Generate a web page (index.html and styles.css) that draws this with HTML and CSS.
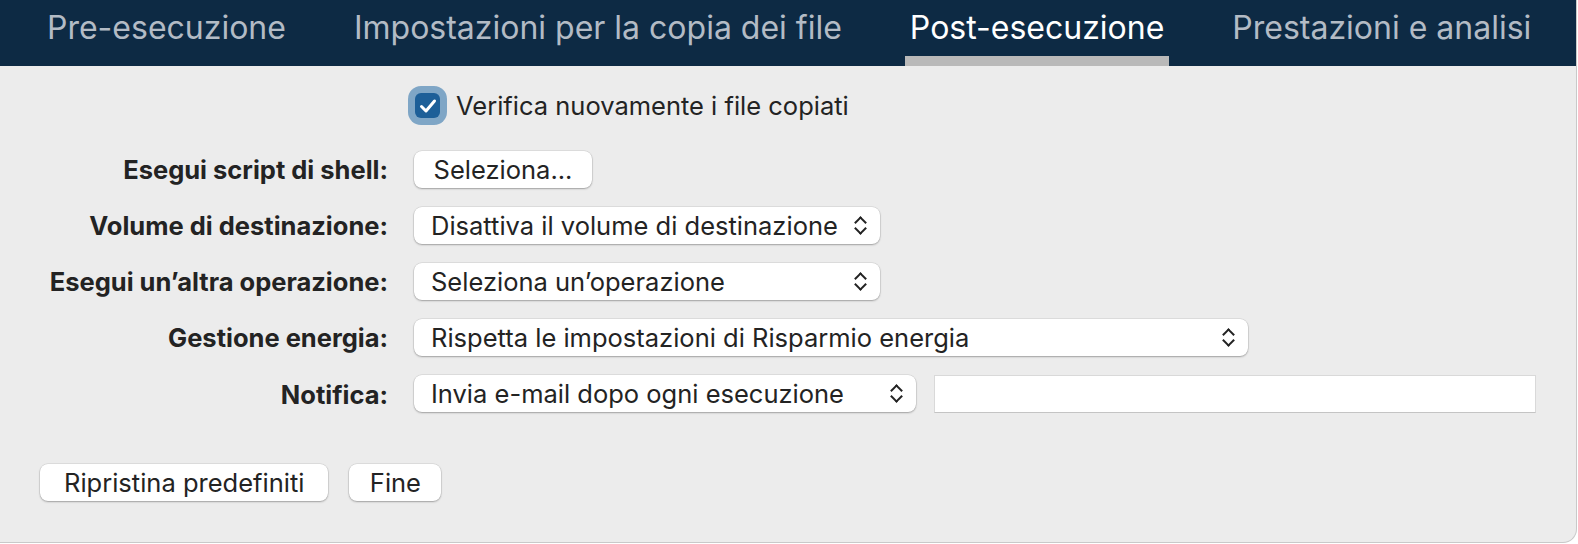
FILE: index.html
```html
<!doctype html>
<html>
    <head>
        <meta charset="utf-8">
        <link rel="stylesheet" href="styles.css">
    </head>
    <body>
    <div class="window">
        <div class="tabs">
            <div class="tab">Pre-esecuzione</div>
            <div class="tab">Impostazioni per la copia dei file</div>
            <div class="tab active">Post-esecuzione</div>
            <div class="tab">Prestazioni e analisi</div>
        </div>

        <div class="content">
            <div class="form">
                <div class="label"></div>
                <label class="check">
                    <span class="checkbox">
                        <svg width="18" height="16" viewBox="0 0 18 16"><path d="M2.5 8.5 L7 13 L15.5 3" fill="none" stroke="white" stroke-width="3" stroke-linecap="round" stroke-linejoin="round"/></svg>
                    </span>
                    Verifica nuovamente i file copiati
                </label>

                <div class="label first">Esegui script di shell:</div>
                <div class="first"><button class="btn pick">Seleziona...</button></div>

                <div class="label">Volume di destinazione:</div>
                <div class="select w-mid">Disattiva il volume di destinazione <span class="chev"></span></div>

                <div class="label">Esegui un’altra operazione:</div>
                <div class="select w-mid">Seleziona un’operazione <span class="chev"></span></div>

                <div class="label">Gestione energia:</div>
                <div class="select w-wide">Rispetta le impostazioni di Risparmio energia <span class="chev"></span></div>

                <div class="label">Notifica:</div>
                <div class="pair">
                    <div class="select w-mail">Invia e-mail dopo ogni esecuzione <span class="chev"></span></div>
                    <div class="field"></div>
                </div>
            </div>

            <div class="footer">
                <button class="btn">Ripristina predefiniti</button>
                <button class="btn fine">Fine</button>
            </div>
        </div>
    </div>
    </body>
</html>
```

FILE: styles.css
```css
body {
    margin: 0;
    background: white;
    font-family: Inter, "Liberation Sans", sans-serif;
    color: #232323;
}
.window {
    width: 1576px;
    height: 542px;
    background: #ececec;
    border-right: 1px solid #c9c9c9;
    border-bottom: 1px solid #c9c9c9;
    border-bottom-right-radius: 14px;
    overflow: hidden;
}
.tabs {
    display: flex;
    height: 66px;
    padding-left: 42px;
    gap: 58px;
    background: #0d2a44;
}
.tab {
    padding: 0 5px;
    font-size: 32px;
    line-height: 56px;
    color: #b3bbc5;
    border-bottom: 10px solid transparent;
}
.tab.active {
    color: white;
    border-bottom-color: #b9b9b9;
}

.content {
    padding: 21px 0 0 40px;
}
.form {
    display: grid;
    grid-template-columns: 348px auto;
    column-gap: 26px;
    row-gap: 19px;
    align-items: center;
    font-size: 25.5px;
}
.label {
    text-align: right;
    font-weight: 700;
    white-space: nowrap;
}
.first {
    margin-top: 8px;
}
.check {
    display: flex;
    align-items: center;
    gap: 16px;
    height: 37px;
}
.checkbox {
    display: flex;
    align-items: center;
    justify-content: center;
    width: 25px;
    height: 25px;
    margin-left: 1px;
    border-radius: 6px;
    background: #1d5f98;
    box-shadow: 0 0 0 7px #7fa6c6;
}
.btn {
    height: 37px;
    padding: 0 24px;
    border: none;
    border-radius: 8px;
    background: white;
    font-family: inherit;
    font-size: 25.5px;
    color: #232323;
    box-shadow: 0 0 0 0.5px rgba(0, 0, 0, 0.12), 0 1px 2px rgba(0, 0, 0, 0.28);
}
.pick {
    width: 178px;
    padding: 0;
}
.select {
    position: relative;
    box-sizing: border-box;
    height: 37px;
    line-height: 37px;
    padding-left: 17px;
    border-radius: 8px;
    background: white;
    white-space: nowrap;
    box-shadow: 0 0 0 0.5px rgba(0, 0, 0, 0.12), 0 1px 2px rgba(0, 0, 0, 0.28);
}
.w-mid { width: 466px; }
.w-wide { width: 834px; }
.w-mail { width: 502px; }
.chev {
    position: absolute;
    right: 13px;
    top: 8px;
    width: 14px;
    height: 20px;
}
.chev::before,
.chev::after {
    content: "";
    position: absolute;
    left: 3px;
    width: 7px;
    height: 7px;
    border-left: 2.4px solid #222;
    border-top: 2.4px solid #222;
}
.chev::before {
    top: 3px;
    transform: rotate(45deg);
}
.chev::after {
    top: 9px;
    transform: rotate(225deg);
}
.pair {
    display: flex;
    gap: 18px;
}
.field {
    box-sizing: border-box;
    width: 602px;
    height: 38px;
    background: white;
    border: 1px solid #d9d9d9;
    border-bottom-color: #c4c4c4;
}

.footer {
    display: flex;
    gap: 21px;
    margin-top: 51px;
}
.fine {
    width: 92px;
    padding: 0;
}
```
